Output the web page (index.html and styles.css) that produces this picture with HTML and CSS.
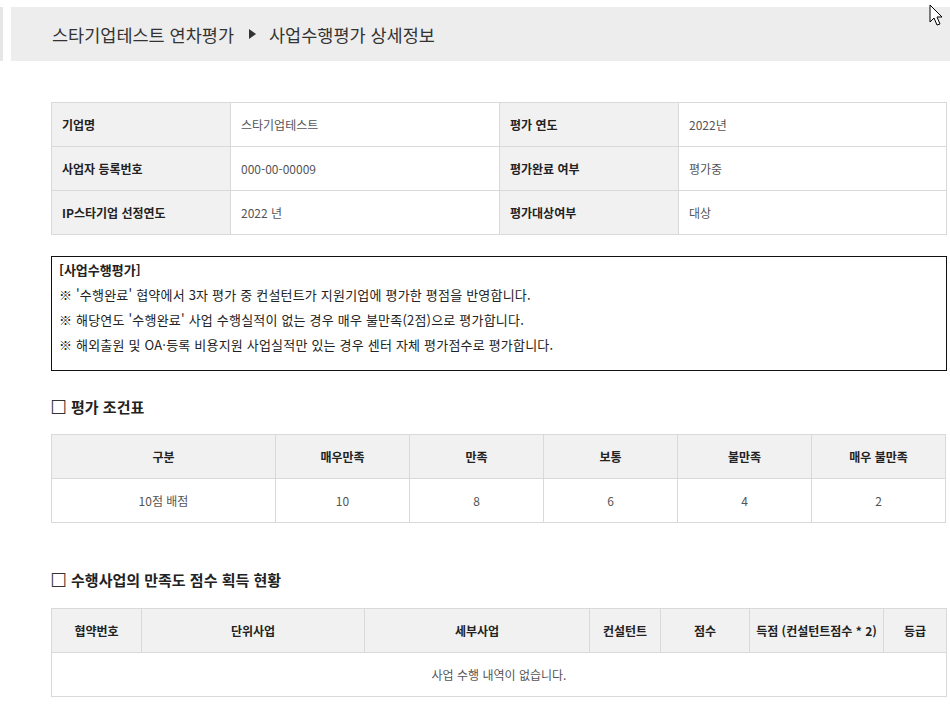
FILE: index.html
```html
<!DOCTYPE html>
<html lang="ko">
<head>
<meta charset="utf-8">
<title>사업수행평가 상세정보</title>
<link rel="stylesheet" href="styles.css">
</head>
<body>
<div class="page">
  <div class="side-strip"></div>
  <div class="main">
    <div class="title-bar">
      <span>스타기업테스트 연차평가</span>
      <span class="arrow"></span>
      <span>사업수행평가 상세정보</span>
    </div>
    <div class="content">
      <table class="info">
        <colgroup><col class="c1"><col class="c2"><col class="c3"><col class="c4"></colgroup>
        <tr><th>기업명</th><td>스타기업테스트</td><th>평가 연도</th><td>2022년</td></tr>
        <tr><th>사업자 등록번호</th><td>000-00-00009</td><th>평가완료 여부</th><td>평가중</td></tr>
        <tr><th>IP스타기업 선정연도</th><td>2022 년</td><th>평가대상여부</th><td>대상</td></tr>
      </table>

      <div class="notice">
        <p class="notice-title">[사업수행평가]</p>
        <p>※ '수행완료' 협약에서 3자 평가 중 컨설턴트가 지원기업에 평가한 평점을 반영합니다.</p>
        <p>※ 해당연도 '수행완료' 사업 수행실적이 없는 경우 매우 불만족(2점)으로 평가합니다.</p>
        <p>※ 해외출원 및 OA·등록 비용지원 사업실적만 있는 경우 센터 자체 평가점수로 평가합니다.</p>
      </div>

      <h3 class="sec-title sec1"><span class="box">☐</span> 평가 조건표</h3>
      <table class="grid cond">
        <colgroup><col class="k1"><col><col><col><col><col></colgroup>
        <tr><th>구분</th><th>매우만족</th><th>만족</th><th>보통</th><th>불만족</th><th>매우 불만족</th></tr>
        <tr><td>10점 배점</td><td>10</td><td>8</td><td>6</td><td>4</td><td>2</td></tr>
      </table>

      <h3 class="sec-title sec2"><span class="box">☐</span> 수행사업의 만족도 점수 획득 현황</h3>
      <table class="grid perf">
        <colgroup><col class="p1"><col class="p2"><col class="p3"><col class="p4"><col class="p5"><col class="p6"><col class="p7"></colgroup>
        <tr><th>협약번호</th><th>단위사업</th><th>세부사업</th><th>컨설턴트</th><th>점수</th><th>득점 (컨설턴트점수 * 2)</th><th>등급</th></tr>
        <tr><td colspan="7">사업 수행 내역이 없습니다.</td></tr>
      </table>
    </div>
  </div>
  <svg class="cursor" width="16" height="24" viewBox="0 0 16 24"><path d="M1 1 L1 18 L5 14 L8 21 L11 20 L8 13 L13 13 Z" fill="#fff" stroke="#000" stroke-width="1"/></svg>
</div>
</body>
</html>
```

FILE: styles.css
```css
* { box-sizing: border-box; }
html, body { margin: 0; padding: 0; background: #fff; }
body {
  font-family: "Noto Sans CJK KR", "Noto Sans", sans-serif;
  color: #333;
  width: 950px;
  overflow: hidden;
}
.page {
  position: relative;
  display: flex;
  align-items: flex-start;
  padding-top: 7px;
}
.side-strip {
  width: 3px;
  height: 54px;
  background: #e6e6e6;
  margin-right: 8px;
  flex: none;
}
.main { flex: 1; }
.title-bar {
  height: 54px;
  background: #ededed;
  display: flex;
  align-items: center;
  padding-left: 41px;
  font-size: 17.5px;
  color: #333;
  letter-spacing: 0;
}
.arrow {
  display: inline-block;
  width: 0; height: 0;
  border-top: 5px solid transparent;
  border-bottom: 5px solid transparent;
  border-left: 7px solid #333;
  margin: 0 13px 0 15px;
}
.content {
  padding: 41px 4px 0 40px;
}
table {
  width: 895px;
  border-collapse: collapse;
  table-layout: fixed;
  font-size: 12px;
}
th, td {
  border: 1px solid #d9d9d9;
  height: 44px;
  padding: 0 10px;
  line-height: 16px;
}
th { background: #f1f1f1; font-weight: bold; color: #222; }
.info th { text-align: left; }
.info td { color: #555; }
.info .c1 { width: 179px; }
.info .c2 { width: 269px; }
.info .c3 { width: 179px; }
.info .c4 { width: 268px; }

.notice {
  margin-top: 21px;
  border: 1px solid #111;
  padding: 0 7px 13px;
  font-size: 13px;
  line-height: 25px;
  color: #222;
  letter-spacing: 0.2px;
}
.notice p { margin: 0; }
.notice-title { font-weight: bold; letter-spacing: 0; }

.sec-title {
  margin: 0;
  font-size: 15px;
  font-weight: bold;
  color: #222;
  line-height: 24px;
  display: flex;
  align-items: center;
}
.sec-title .box {
  font-family: "DejaVu Sans", sans-serif;
  font-weight: normal;
  font-size: 19px;
  line-height: 24px;
  margin-right: 4px;
  margin-left: -1px;
  color: #333;
}
.sec1 { margin-top: 24px; margin-bottom: 15px; }
.sec2 { margin-top: 45px; margin-bottom: 16px; }
.grid th, .grid td { text-align: center; white-space: nowrap; padding: 0 4px; }
.grid td { color: #555; }
.cond .k1 { width: 224px; }
.perf .p1 { width: 90px; }
.perf .p2 { width: 223px; }
.perf .p3 { width: 225px; }
.perf .p4 { width: 71px; }
.perf .p5 { width: 89px; }
.perf .p6 { width: 134px; }
.perf .p7 { width: 63px; }
.cursor {
  position: absolute;
  left: 929px;
  top: 4px;
}
```
